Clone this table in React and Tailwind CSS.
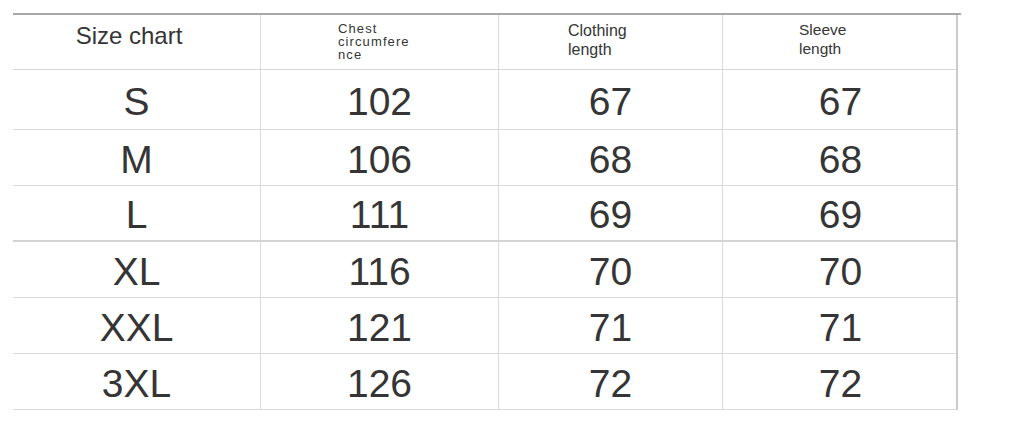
import React from 'react';

const rows = [
  { size: 'S', chest: '102', length: '67', sleeve: '67', h: 'h-[60px]' },
  { size: 'M', chest: '106', length: '68', sleeve: '68', h: 'h-[56px]' },
  { size: 'L', chest: '111', length: '69', sleeve: '69', h: 'h-[56px]', thick: true },
  { size: 'XL', chest: '116', length: '70', sleeve: '70', h: 'h-[56px]' },
  { size: 'XXL', chest: '121', length: '71', sleeve: '71', h: 'h-[56px]' },
  { size: '3XL', chest: '126', length: '72', sleeve: '72', h: 'h-[56px]' },
];

const cols = 'grid grid-cols-[247px_238px_224px_236px]';

const App = () => {
  return (
    <div className="w-[1020px] h-[438px] bg-white pt-[13px] pl-[13px] font-['Liberation_Sans',Arial,sans-serif] text-[#353535]">
      <div className="w-[948px] border-t-2 border-[#a8a8a8]">
        <div className="w-[945px] border-r-2 border-[#cbcbcb]">
          {/* header */}
          <div className={`${cols} h-[55px] border-b border-[#d9d9d9]`}>
            <div className="flex items-start justify-center pt-[6px] pr-[15px] text-[24px] leading-[30px]">
              Size chart
            </div>
            <div className="border-l border-[#dcdcdc] pl-[77px] pt-[7px] text-[13px] leading-[13px] tracking-[1.1px]">
              Chest
              <br />
              circumfere
              <br />
              nce
            </div>
            <div className="border-l border-[#dcdcdc] pl-[69px] pt-[6px] text-[16px] leading-[19px]">
              Clothing
              <br />
              length
            </div>
            <div className="border-l border-[#dcdcdc] pl-[76px] pt-[5px] text-[15.5px] leading-[19px]">
              Sleeve
              <br />
              length
            </div>
          </div>

          {rows.map((r) => (
            <div
              key={r.size}
              className={`${cols} ${r.h} ${r.thick ? 'border-b-2 border-[#d4d4d4]' : 'border-b border-[#d9d9d9]'}`}
            >
              <div className="flex items-center justify-center pt-[3px] text-[39px] leading-none">{r.size}</div>
              <div className="flex items-center justify-center border-l border-[#dcdcdc] pt-[3px] text-[39px] leading-none">{r.chest}</div>
              <div className="flex items-center justify-center border-l border-[#dcdcdc] pt-[3px] text-[39px] leading-none">{r.length}</div>
              <div className="flex items-center justify-center border-l border-[#dcdcdc] pt-[3px] text-[39px] leading-none">{r.sleeve}</div>
            </div>
          ))}
        </div>
      </div>
    </div>
  );
};

export default App;
